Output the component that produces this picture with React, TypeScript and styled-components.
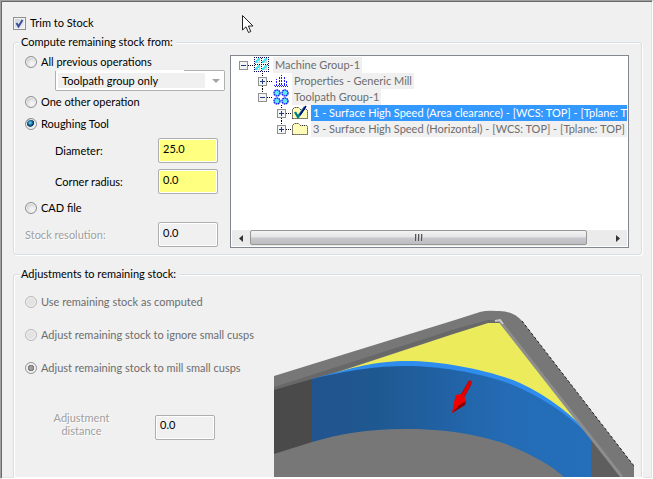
import React from "react";
import styled, { createGlobalStyle, css } from "styled-components";

const GlobalStyle = createGlobalStyle`
  *, *::before, *::after { box-sizing: border-box; }
  body { margin: 0; background: #f0f0f0; }
  body, button, input, select {
    font-family: Lato, "Liberation Sans", sans-serif;
    font-size: 11px;
    line-height: 14px;
    color: #000;
  }
`;

const Page = styled.main`
  position: relative;
  display: flex;
  flex-direction: column;
  min-height: 100vh;
  padding: 14px 10px 1px 12px;
  background: #f0f0f0;
  border: 1px solid;
  border-color: #a0a0a0 #fff #fff #a0a0a0;
  box-shadow: inset 1px 1px #696969, inset -1px -1px #e3e3e3;
  overflow: hidden;
`;

const Choice = styled.label<{ $dim?: boolean }>`
  display: flex;
  align-items: center;
  gap: 4px;
  height: 16px;
  white-space: nowrap;
  color: ${(p) => (p.$dim ? "#6d6d6d" : "#000")};
`;

const CheckBox = styled.span`
  display: grid;
  width: 13px;
  height: 13px;
  > * { grid-area: 1 / 1; }
  svg { pointer-events: none; }
`;

const CheckInput = styled.input`
  appearance: none;
  margin: 0;
  width: 13px;
  height: 13px;
  border: 1px solid #8e8f8f;
  background: linear-gradient(135deg, #c8ced8, #f4f5f7);
  box-shadow: inset 0 0 0 1px #f4f4f4;
`;

const Radio = styled.input`
  appearance: none;
  flex: none;
  margin: 0;
  width: 12px;
  height: 12px;
  border: 1px solid #8e8f8f;
  border-radius: 50%;
  background: radial-gradient(circle at 60% 65%, #f2f2f2 20%, #c6c9cd 75%);
  box-shadow: inset 0 0 0 1px #f4f4f4;
  &:checked {
    background: radial-gradient(circle at 42% 38%, #8fdcf8 0, #1d86b8 20%, #0c2c50 42%, #e6e9ed 50%);
  }
  &:disabled { border-color: #b9b9b9; background: #e3e3e3; }
  &:checked:disabled {
    border-color: #949494;
    background: radial-gradient(circle, #a0a0a0 15%, #7c7c7c 42%, #e9e9e9 50%);
  }
`;

const Group = styled.fieldset<{ $open?: boolean }>`
  min-width: 0;
  margin: 4px 0 0;
  padding: 5px 11px 6px;
  border: 1px solid #d5dfe5;
  border-radius: 3px;
  box-shadow: inset 1px 1px #fff, 1px 1px #fff;
  ${(p) =>
    p.$open &&
    css`
      flex: 1;
      margin-top: 12px;
      padding: 13px 7px 0 11px;
      border-bottom: 0;
      border-radius: 3px 3px 0 0;
    `}
`;

const Legend = styled.legend`
  margin-left: -6px;
  padding: 0 3px 0 2px;
  height: 14px;
  background: #f0f0f0;
`;

const StockColumns = styled.div`
  display: grid;
  grid-template-columns: 200px minmax(0, 1fr);
  gap: 5px;
`;

const Stack = styled.div<{ $gap: number }>`
  display: flex;
  flex-direction: column;
  gap: ${(p) => p.$gap}px;
`;

const SourceOptions = styled(Stack)`
  padding-bottom: 1px;
`;

const ComboWrap = styled.div`
  display: grid;
  align-items: center;
  margin-left: 30px;
  > * { grid-area: 1 / 1; }
  > svg { justify-self: end; margin-right: 5px; pointer-events: none; }
`;

const Combo = styled.select`
  appearance: none;
  width: 100%;
  height: 21px;
  padding: 0 20px 0 6px;
  border: 1px solid #b0b0b0;
  border-top-color: transparent;
  border-radius: 2px;
  background:
    linear-gradient(#b0b0b0, #b0b0b0) 100% 0 / 24% 1px no-repeat border-box,
    linear-gradient(#f0f0f0, #f0f0f0) 2px 2px / calc(100% - 21px) 15px no-repeat padding-box,
    linear-gradient(#fff, #fff) border-box;
`;

const Field = styled.div<{ $indent?: boolean; $dim?: boolean }>`
  display: flex;
  align-items: center;
  justify-content: space-between;
  height: 25px;
  margin-right: 7px;
  padding-left: ${(p) => (p.$indent ? 30 : 0)}px;
  ${(p) => p.$dim && css`color: #a0a0a0; text-shadow: 1px 1px #fff;`}
`;

const NumberBox = styled.input`
  width: 60px;
  height: 25px;
  padding: 0 4px 5px;
  border: 1px solid #aeaeae;
  border-radius: 2px;
  background: #ffff80;
  box-shadow: inset 0 0 0 1px #fff;
  &:disabled {
    background: #f0f0f0;
    color: #000;
    opacity: 1;
  }
`;

const TreeBox = styled.div`
  display: flex;
  flex-direction: column;
  min-width: 0;
  margin: 1px 1px 0 0;
  padding: 1px;
  background: #fff;
  border: 1px solid #828790;
`;

const TreeList = styled.ul`
  flex: 1;
  margin: 0;
  padding: 0 0 0 7px;
  list-style: none;
  overflow: hidden;
`;

const TreeRow = styled.li<{ $depth: number }>`
  display: flex;
  align-items: center;
  height: 16px;
  padding-left: ${(p) => p.$depth * 19}px;
  svg { flex: none; }
`;

const NodeText = styled.span<{ $selected?: boolean }>`
  flex: none;
  margin-left: 3px;
  padding: 1px 2px;
  white-space: nowrap;
  color: ${(p) => (p.$selected ? "#fff" : "#6d6d6d")};
  background: ${(p) => (p.$selected ? "#3399ff" : "#f0f0f0")};
`;

const ScrollBar = styled.div`
  display: flex;
  height: 16px;
  background: #ebebeb;
`;

const ScrollButton = styled.button`
  display: grid;
  place-items: center;
  width: 18px;
  padding: 0;
  border: 0;
  background: none;
`;

const ScrollTrack = styled.div`
  flex: 1;
  display: flex;
`;

const ScrollThumb = styled.div`
  display: grid;
  place-items: center;
  width: 94%;
  height: 15px;
  border: 1px solid #979797;
  border-radius: 2px;
  background: linear-gradient(#f3f3f3, #e4e4e6 48%, #c8c8cd 52%, #bdbdc3);
`;

const AdjustColumns = styled.div`
  display: grid;
  grid-template-columns: 249px minmax(0, 1fr);
`;

const DistanceRow = styled.div`
  display: flex;
  align-items: center;
  gap: 45px;
  margin-top: 35px;
  padding-left: 28px;
`;

const DistanceLabel = styled.label`
  width: 57px;
  margin-bottom: 6px;
  line-height: 13px;
  text-align: center;
  color: #a0a0a0;
  text-shadow: 1px 1px #fff;
`;

const Drawing = styled.svg`
  display: block;
  align-self: start;
  width: 100%;
  margin-top: 15px;
`;

const Pointer = styled.svg`
  position: absolute;
  left: 240px;
  top: 13px;
  pointer-events: none;
`;

type Kind = "machine" | "properties" | "toolpath" | "checked" | "folder";

const Dots = ({ pts, fill }: { pts: number[][]; fill: string }) => (
  <>
    {pts.map(([x, y]) => (
      <rect key={`${x}-${y}`} x={x} y={y} width="1" height="1" fill={fill} />
    ))}
  </>
);

const corners = [[0, 0], [8, 0], [0, 8], [8, 8]];

function NodeIcon({ kind }: { kind: Kind }) {
  if (kind === "machine") {
    const pts: number[][] = [];
    for (let y = 0; y < 15; y += 1)
      for (let x = 0; x < 15; x += 1)
        if ((x % 7 === 0 || y % 7 === 0) && (x + y) % 2 === 0) pts.push([x, y]);
    return (
      <svg width="16" height="16" viewBox="0 0 16 16" shapeRendering="crispEdges">
        <path d="M1 6V4H2V3H3V2H4V1H6V3H5V4H4V5H3V6ZM8 6V4H9V3H10V2H11V1H13V3H12V4H11V5H10V6ZM1 13V11H2V10H3V9H4V8H6V10H5V11H4V12H3V13ZM8 13V11H9V10H10V9H11V8H13V10H12V11H11V12H10V13Z" fill="#3fe8f0" />
        <path d="M3 6H6V3H5V5H3ZM10 6H13V3H12V5H10ZM3 13H6V10H5V12H3ZM10 13H13V10H12V12H10Z" fill="#b8d8d8" />
        <Dots pts={pts} fill="#000060" />
      </svg>
    );
  }
  if (kind === "properties")
    return (
      <svg width="16" height="16" viewBox="0 0 16 16" shapeRendering="crispEdges">
        <path d="M3.5 13V6M6.5 12V4M8.5 12V2M11.5 12V4M13.5 13V7" stroke="#1a1aff" strokeDasharray="2 1" fill="none" />
        <path d="M1 12.500H15" stroke="#1a1aff" strokeDasharray="1 1" />
        <path d="M2 13.500H15" stroke="#1a1aff" strokeDasharray="1 1" />
      </svg>
    );
  if (kind === "toolpath")
    return (
      <svg width="16" height="16" viewBox="0 0 16 16">
        {corners.map(([x, y]) => (
          <circle key={`${x}${y}`} cx={x + 4} cy={y + 4} r="3" fill="#5eeaf2" stroke="#1a1aff" strokeWidth="1.4" strokeDasharray="1.6 0.6" />
        ))}
      </svg>
    );
  return (
    <svg width="16" height="16" viewBox="0 0 16 16">
      <path d="M.5 13.5V4.5L2.5 2.5H6.5L8.5 4.5H14.5L15.5 5.5V13.5Z" fill="#fffbb8" stroke="#000" strokeDasharray="1 1" />
      {kind === "checked" && (
        <>
          <path d="M3 7L6 12L13 2" fill="none" stroke="#008080" strokeWidth="2.4" />
          <path d="M8 10L14 1" fill="none" stroke="#000080" strokeWidth="1.4" />
        </>
      )}
    </svg>
  );
}

function Expander({ open, up, down }: { open?: boolean; up?: boolean; down?: boolean }) {
  return (
    <svg width="15" height="16" viewBox="0 0 15 16" shapeRendering="crispEdges">
      <path d={`M9 8.5H15${up ? "M4.5 0V4" : ""}${down ? "M4.5 13V16" : ""}`} stroke="#000" strokeDasharray="1 1" />
      <rect x="0.5" y="4.5" width="8" height="8" fill="#f4f4f4" stroke="#919191" />
      <path d={open ? "M2 8.5H7" : "M2 8.5H7M4.5 6V11"} stroke="#1c3c8c" />
    </svg>
  );
}

const nodes: {
  text: string; depth: number; kind: Kind;
  open?: boolean; up?: boolean; down?: boolean; selected?: boolean;
}[] = [
  { text: "Machine Group-1", depth: 0, kind: "machine", open: true },
  { text: "Properties - Generic Mill", depth: 1, kind: "properties", up: true, down: true },
  { text: "Toolpath Group-1", depth: 1, kind: "toolpath", open: true, up: true },
  { text: "1 - Surface High Speed (Area clearance) - [WCS: TOP] - [Tplane: TOP]", depth: 2, kind: "checked", up: true, down: true, selected: true },
  { text: "3 - Surface High Speed (Horizontal) - [WCS: TOP] - [Tplane: TOP]", depth: 2, kind: "folder", up: true },
];

function OperationTree() {
  return (
    <TreeBox>
      <TreeList role="tree" aria-label="Operations">
        {nodes.map((n) => (
          <TreeRow key={n.text} $depth={n.depth} role="treeitem" aria-selected={!!n.selected}>
            <Expander open={n.open} up={n.up} down={n.down} />
            <NodeIcon kind={n.kind} />
            <NodeText $selected={n.selected}>{n.text}</NodeText>
          </TreeRow>
        ))}
      </TreeList>
      <ScrollBar>
        <ScrollButton type="button" aria-label="Scroll left">
          <svg width="4" height="7" viewBox="0 0 4 7"><path d="M4 0V7L0 3.5Z" fill="#333" /></svg>
        </ScrollButton>
        <ScrollTrack>
          <ScrollThumb>
            <svg width="8" height="7" viewBox="0 0 8 7">
              <path d="M.5 0V7M3.5 0V7M6.5 0V7" stroke="#555" />
              <path d="M1.5 0V7M4.5 0V7M7.5 0V7" stroke="#bbb" />
            </svg>
          </ScrollThumb>
        </ScrollTrack>
        <ScrollButton type="button" aria-label="Scroll right">
          <svg width="4" height="7" viewBox="0 0 4 7"><path d="M0 0V7L4 3.5Z" fill="#333" /></svg>
        </ScrollButton>
      </ScrollBar>
    </TreeBox>
  );
}

function StockDrawing() {
  return (
    <Drawing viewBox="274 309 360 168" role="img" aria-label="Pocket corner with remaining stock">
      <defs>
        <linearGradient id="wall" x1="0" x2="1">
          <stop offset="0" stopColor="#22548f" />
          <stop offset="0.22" stopColor="#1f5890" />
          <stop offset="0.5" stopColor="#2163a6" />
          <stop offset="0.7" stopColor="#246cb5" />
          <stop offset="1" stopColor="#246eba" />
        </linearGradient>
      </defs>
      <path d="M274 376L455 320L480 312Q487 310 497 311Q512 310 522 321L634 466V477H274Z" fill="#777" />
      <path d="M522 321L634 466" stroke="#222" strokeWidth="1" strokeDasharray="3 2" fill="none" />
      <path d="M274 387L455 329L488 320L500 321L502 324L455 333L312 380L274 391Z" fill="#686868" />
      <path d="M274 390L312 379V442L274 454Z" fill="#4a4a4a" />
      <path d="M591 438L623 477H591Z" fill="#5e5e5e" />
      <path d="M335 373L455 333.500L488 323H500L583 428L540 400L440 370Z" fill="#ebeb5c" />
      <path d="M312 379C355 367 375 361 408 361C440 361 490 370 520 383C550 397 575 417 591 437V445L312 385Z" fill="#2f8dee" />
      <path d="M312 379C350 370 375 366 408 366C440 366 490 374 520 388C550 402 575 420 591 438V477H564C550 464 525 451 500 442C465 432 440 429 403 429C368 429 340 434 312 442Z" fill="url(#wall)" />
      <path d="M499 320L622 477" stroke="#8d8d8d" strokeWidth="3" fill="none" />
      <path d="M495 321L500 320L503 324" stroke="#c8c8cc" strokeWidth="2" fill="none" />
      <path d="M469 381H471V384L464 397L461 395Z" fill="#e80000" stroke="#c00000" strokeWidth="1" />
      <path d="M456 395L461 394L465 398L466 403L460 408L452 413L454 402Z" fill="#f40000" />
      <path d="M466 401L465 405L452 413L459 405Z" fill="#8c0000" />
    </Drawing>
  );
}

export default function App() {
  return (
    <>
      <GlobalStyle />
      <Page>
        <Choice>
          <CheckBox>
            <CheckInput type="checkbox" defaultChecked />
            <svg width="13" height="13" viewBox="0 0 13 13">
              <path d="M3.500 6L5.500 9.500L9.500 3" fill="none" stroke="#3b4f9b" strokeWidth="2" />
            </svg>
          </CheckBox>
          Trim to Stock
        </Choice>
        <Group>
          <Legend>Compute remaining stock from:</Legend>
          <StockColumns>
            <SourceOptions $gap={6}>
              <Stack $gap={3}>
                <div>
                  <Choice><Radio type="radio" name="source" />All previous operations</Choice>
                  <ComboWrap>
                    <Combo aria-label="Operations to include">
                      <option>Toolpath group only</option>
                    </Combo>
                    <svg width="8" height="4" viewBox="0 0 8 4"><path d="M0 0H8L4 4Z" fill="#a5a5a5" /></svg>
                  </ComboWrap>
                </div>
                <Choice><Radio type="radio" name="source" />One other operation</Choice>
              </Stack>
              <Choice><Radio type="radio" name="source" defaultChecked />Roughing Tool</Choice>
              <Field $indent>
                <label htmlFor="diameter">Diameter:</label>
                <NumberBox id="diameter" defaultValue="25.0" />
              </Field>
              <Field $indent>
                <label htmlFor="radius">Corner radius:</label>
                <NumberBox id="radius" defaultValue="0.0" />
              </Field>
              <Stack $gap={6}>
                <Choice><Radio type="radio" name="source" />CAD file</Choice>
                <Field $dim>
                  <label htmlFor="resolution">Stock resolution:</label>
                  <NumberBox id="resolution" defaultValue="0.0" disabled />
                </Field>
              </Stack>
            </SourceOptions>
            <OperationTree />
          </StockColumns>
        </Group>
        <Group $open>
          <Legend>Adjustments to remaining stock:</Legend>
          <AdjustColumns>
            <div>
              <Stack $gap={17}>
                <Choice $dim><Radio type="radio" name="adjust" disabled />Use remaining stock as computed</Choice>
                <Choice $dim><Radio type="radio" name="adjust" disabled />Adjust remaining stock to ignore small cusps</Choice>
                <Choice $dim><Radio type="radio" name="adjust" disabled defaultChecked />Adjust remaining stock to mill small cusps</Choice>
              </Stack>
              <DistanceRow>
                <DistanceLabel htmlFor="distance">Adjustment distance</DistanceLabel>
                <NumberBox id="distance" defaultValue="0.0" disabled />
              </DistanceRow>
            </div>
            <StockDrawing />
          </AdjustColumns>
        </Group>
        <Pointer width="13" height="20" viewBox="0 0 13 20">
          <path d="M1.500 1.500V16L5 12.800L7.500 18.500L9.800 17.500L7.400 12H12Z" fill="#fff" stroke="#222" />
        </Pointer>
      </Page>
    </>
  );
}
